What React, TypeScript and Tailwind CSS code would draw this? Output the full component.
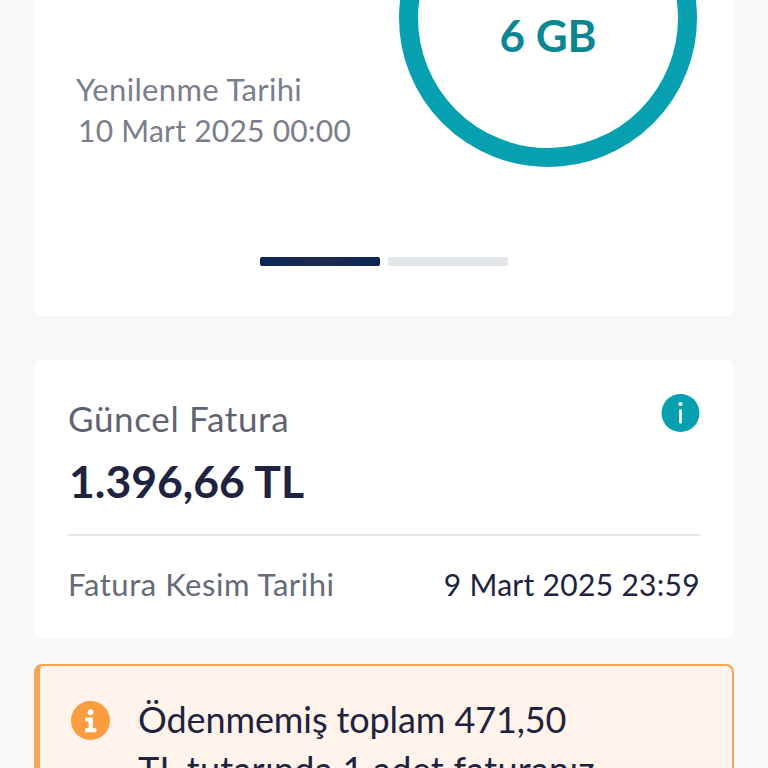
const font = "font-['Lato','Noto_Sans',sans-serif]"

function InfoIcon({ color, className }: { color: string; className: string }) {
  return (
    <svg viewBox="0 0 40 40" className={className}>
      <circle cx="20" cy="20" r="20" fill={color} />
      <circle cx="20" cy="10.5" r="2.2" fill="#fff" />
      <rect x="18.6" y="16" width="2.8" height="15" rx="1" fill="#fff" />
    </svg>
  )
}

function WarnIcon({ className }: { className: string }) {
  return (
    <svg viewBox="0 0 40 40" className={className}>
      <circle cx="20" cy="20" r="20" fill="#fd9b3f" />
      <circle cx="20" cy="11.5" r="3" fill="#fff" />
      <path d="M14.5 17h8v11h3.5v4H14.5v-4H18v-7h-3.5z" fill="#fff" />
    </svg>
  )
}

export default function App() {
  return (
    <div className={`${font} h-[768px] w-[768px] overflow-hidden bg-[#f7f8fa] px-[34px]`}>
      {/* Kalan kullanım */}
      <div className="flex h-[316px] flex-col rounded-b-lg bg-white">
        <div className="flex">
          <div className="w-[365px] pl-[42px] pt-[69px] text-[#7a7e8c]">
            <p className="text-[31px] leading-[41px] tracking-[0.35px]">Yenilenme Tarihi</p>
            <p className="pl-[2px] text-[30px] leading-[41px] tracking-[0.25px]">10 Mart 2025 00:00</p>
          </div>
          <div className="-mt-[131px] flex h-[298px] w-[298px] shrink-0 items-center justify-center rounded-full border-[19px] border-[#06a0b0]">
            <span className="mt-[34px] text-[44px] font-bold text-[#0b8793]">6 GB</span>
          </div>
        </div>
        <div className="mt-[90px] flex justify-center gap-2">
          <div className="h-[9px] w-[120px] rounded-[2px] bg-gradient-to-r from-[#0a2558] via-[#20294e] to-[#0a2558]" />
          <div className="h-[9px] w-[120px] rounded-[2px] bg-[#e2e4ec]" />
        </div>
      </div>

      {/* Güncel fatura */}
      <div className="mt-[44px] h-[278px] rounded-lg bg-white px-[34px]">
        <div className="flex items-start justify-between pt-[34px]">
          <p className="pt-[2px] text-[35px] leading-[44px] tracking-[0.65px] text-[#5f6371]">Güncel Fatura</p>
          <InfoIcon color="#06a0b0" className="h-[38px] w-[39px]" />
        </div>
        <p className="mt-[11px] pl-[1px] text-[44.5px] font-bold leading-[60px] text-[#20233f]">1.396,66 TL</p>
        <div className="mt-[23px] h-[2px] bg-[#e4e6ea]" />
        <div className="mt-[28px] flex items-center justify-between leading-[40px]">
          <span className="text-[31px] tracking-[0.55px] text-[#666a78]">Fatura Kesim Tarihi</span>
          <span className="text-[30px] tracking-[0.3px] text-[#20233f]">9 Mart 2025 23:59</span>
        </div>
      </div>

      {/* Ödenmemiş fatura uyarısı */}
      <div className="mt-[26px] flex h-[200px] gap-[28px] rounded-lg border-2 border-l-[6px] border-[#f7a555] bg-[#fff3eb] pl-[31px] pt-[35px]">
        <WarnIcon className="h-[39px] w-[39px] shrink-0" />
        <p className="-mt-[7px] w-[470px] text-[36px] leading-[50px] text-[#20233f]">
          <span className="tracking-[-0.1px]">Ödenmemiş toplam 471,50</span>{' '}
          <span className="tracking-[0.28px]">TL tutarında 1 adet faturanız</span> bulunmaktadır.
        </p>
      </div>
    </div>
  )
}
